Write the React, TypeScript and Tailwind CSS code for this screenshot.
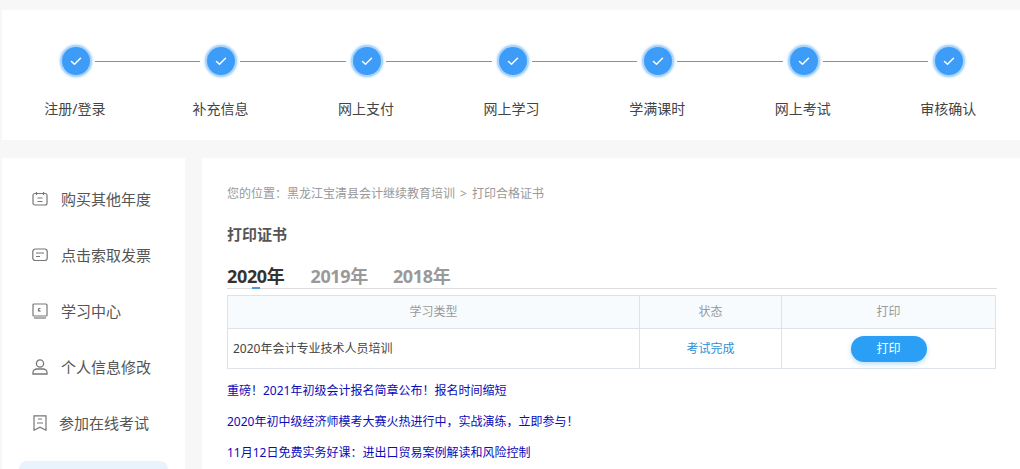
import React from "react";

const steps = ["注册/登录", "补充信息", "网上支付", "网上学习", "学满课时", "网上考试", "审核确认"];
const ic = { fill: "none", stroke: "#777", strokeWidth: 1.2 } as const;

const menu: [string, React.ReactNode, string][] = [
  ["购买其他年度", <svg width="16" height="16" viewBox="0 0 16 16" {...ic}><rect x="1" y="2.5" width="14" height="11.5" rx="2" /><path d="M4.5 1v3M11.5 1v3M5.5 7h5M5.5 10.500h5" /></svg>, "ml-[13px]"],
  ["点击索取发票", <svg width="16" height="16" viewBox="0 0 16 16" {...ic}><rect x="0.8" y="2" width="14.4" height="11.500" rx="2.500" /><path d="M4 6h8M4 9.500h4" /></svg>, "ml-[13px]"],
  ["学习中心", <svg width="16" height="16" viewBox="0 0 16 16" {...ic}><rect x="1" y="1" width="14" height="12" rx="1" /><path d="M2 15h12" /><path d="M6.500 5.500h2M6.500 5.500v3M8.500 8.500l-2-1.500" /></svg>, "ml-[13px]"],
  ["个人信息修改", <svg width="16" height="16" viewBox="0 0 16 16" {...ic} strokeWidth={1.3}><circle cx="8" cy="4.500" r="3.600" /><path d="M1 15v-1.500c0-2 1.800-3.500 4-3.500h6c2.200 0 4 1.500 4 3.500V15z" /></svg>, "ml-[13px]"],
  ["参加在线考试", <svg width="16" height="16" viewBox="0 0 16 16" {...ic}><path d="M2 .8h12v14.400l-6-3-6 3z" /><path d="M6 4h4M5 8h6" /></svg>, "ml-[11px]"],
];

const links = [
  "重磅！2021年初级会计报名简章公布！报名时间缩短",
  "2020年初中级经济师模考大赛火热进行中，实战演练，立即参与！",
  "11月12日免费实务好课：进出口贸易案例解读和风险控制",
];

export default function App() {
  return (
    <div
      className="h-[469px] w-[1020px] overflow-hidden bg-[#f7f7f7] pt-[10px] pl-[2px] text-[#333]"
      style={{ fontFamily: '"Noto Sans", "Noto Sans CJK SC", sans-serif' }}
    >
      <div className="grid h-[130px] w-[1018px] grid-cols-[repeat(7,145.6px)] bg-white pt-[35px]">
        {steps.map((s, i) => (
          <div key={s} className="flex flex-col items-center">
            <div className="flex h-[32px] w-full items-center">
              <div className="mr-[7px] flex-1">
                {i > 0 && <div className="h-[1px] bg-[#4aa3dd]" />}
              </div>
              <div className="flex h-[28px] w-[28px] items-center justify-center rounded-full bg-[#3d9cf8] shadow-[0_0_0_2px_#a9d4fb,0_0_2px_3px_#d4e9fd]">
                <svg width="14" height="14" viewBox="0 0 14 14" fill="none" stroke="#fff" strokeWidth="1.500" strokeLinecap="round" strokeLinejoin="round">
                  <path d="M2.500 7.500l3 2.700 6-6" />
                </svg>
              </div>
              <div className="ml-[5px] flex-1">
                {i < 6 && <div className="h-[1px] bg-[#4aa3dd]" />}
              </div>
            </div>
            <div className="mt-[22px] text-[14px] leading-[20px] text-[#444]">{s}</div>
          </div>
        ))}
      </div>

      <div className="mt-[18px] flex gap-[17px]">
        <div className="h-[320px] w-[183px] bg-white pt-[31px]">
          <div className="flex flex-col gap-[36px]">
            {menu.map(([t, icon, cls]) => (
              <div key={t} className="flex h-[20px] items-center pl-[30px]">
                <span className="shrink-0">{icon}</span>
                <span className={`${cls} text-[15px] leading-[20px] text-[#555]`}>{t}</span>
              </div>
            ))}
          </div>
          <div className="mx-[17px] mt-[28px] h-[40px] rounded-[8px] bg-[#e9f3fd]" />
        </div>

        <div className="h-[320px] flex-1 bg-white pt-[27px] pl-[25px]">
          <div className="flex h-[18px] items-center text-[12px] text-[#999]">
            您的位置：黑龙江宝清县会计继续教育培训<span className="mx-[5px]">&gt;</span>打印合格证书
          </div>
          <div className="mt-[21px] h-[20px] text-[15px] leading-[20px] font-bold text-[#555]">打印证书</div>
          <div className="relative mt-[21px] flex h-[24px] w-[770px] gap-[25px] border-b border-[#ddd] text-[18px] leading-[22px] font-bold tracking-[-0.35px] text-[#999]">
            <span className="mr-px text-[#333]">2020年</span>
            <span>2019年</span>
            <span>2018年</span>
            <span className="absolute top-[22px] left-[25px] h-[2px] w-[8px] bg-[#4f9bd8]" />
          </div>
          <table className="mt-[6px] w-[769px] table-fixed border-collapse text-[12px]">
            <thead>
              <tr className="h-[33px] bg-[#f8fbfe] text-[#999]">
                <th className="w-[412px] border border-[#dde3e8] font-normal">学习类型</th>
                <th className="w-[142px] border border-[#dde3e8] font-normal">状态</th>
                <th className="border border-[#dde3e8] font-normal">打印</th>
              </tr>
            </thead>
            <tbody>
              <tr className="h-[40px]">
                <td className="border border-[#dde3e8] pl-[5px] text-[#444]">2020年会计专业技术人员培训</td>
                <td className="border border-[#dde3e8] text-center text-[#2d8fd5]">考试完成</td>
                <td className="border border-[#dde3e8] text-center">
                  <button className="h-[26px] w-[76px] rounded-full bg-[#2a9ff5] text-white shadow-[0_2px_5px_rgba(42,159,245,0.35)]">打印</button>
                </td>
              </tr>
            </tbody>
          </table>
          <div className="mt-[13px] flex flex-col gap-[13px] text-[12px] leading-[18px] text-[#0b0bb8]">
            {links.map((l) => (
              <div key={l}>{l}</div>
            ))}
          </div>
        </div>
      </div>
    </div>
  );
}
